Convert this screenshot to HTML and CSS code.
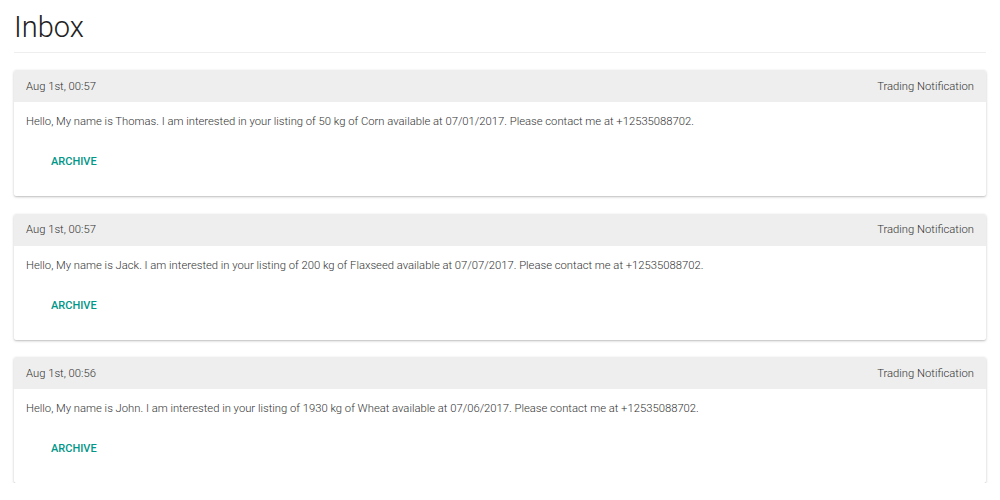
FILE: index.html
```html
<!DOCTYPE html>
<html>
<head>
<meta charset="utf-8">
<link rel="stylesheet" href="styles.css">
</head>
<body>
<div class="page">
  <h1 class="title">Inbox</h1>
  <div class="list">
    <div class="card">
      <div class="card-head"><span>Aug 1st, 00:57</span><span>Trading Notification</span></div>
      <div class="card-body">Hello, My name is Thomas. I am interested in your listing of 50 kg of Corn available at 07/01/2017. Please contact me at +12535088702.</div>
      <div class="card-actions"><button class="btn">ARCHIVE</button></div>
    </div>
    <div class="card">
      <div class="card-head"><span>Aug 1st, 00:57</span><span>Trading Notification</span></div>
      <div class="card-body">Hello, My name is Jack. I am interested in your listing of 200 kg of Flaxseed available at 07/07/2017. Please contact me at +12535088702.</div>
      <div class="card-actions"><button class="btn">ARCHIVE</button></div>
    </div>
    <div class="card">
      <div class="card-head"><span>Aug 1st, 00:56</span><span>Trading Notification</span></div>
      <div class="card-body">Hello, My name is John. I am interested in your listing of 1930 kg of Wheat available at 07/06/2017. Please contact me at +12535088702.</div>
      <div class="card-actions"><button class="btn">ARCHIVE</button></div>
    </div>
  </div>
</div>
</body>
</html>
```
FILE: styles.css
```css
html, body {
  margin: 0;
  padding: 0;
  background: #fff;
}
body {
  font-family: Roboto, "Liberation Sans", sans-serif;
  color: #333;
}
.page {
  padding: 0 14px;
}
.title {
  margin: 0;
  padding-top: 10px;
  font-size: 29px;
  font-weight: 300;
  line-height: 34px;
  color: #222;
  padding-bottom: 8px;
  border-bottom: 1px solid #eee;
}
.list {
  display: flex;
  flex-direction: column;
  gap: 17.5px;
  padding-top: 17px;
}
.card {
  background: #fff;
  border-radius: 2px;
  box-shadow: 0 1px 3px rgba(0,0,0,0.2), 0 1px 1px rgba(0,0,0,0.08);
  overflow: hidden;
}
.card-head {
  display: flex;
  justify-content: space-between;
  align-items: center;
  height: 32px;
  padding: 0 12px;
  background: #eee;
  font-size: 11.25px;
  font-weight: 300;
  color: #333;
}
.card-body {
  padding: 11px 12px 0;
  font-size: 11.25px;
  font-weight: 300;
  line-height: 18px;
  color: #333;
}
.card-actions {
  padding: 13px 21px 16px;
}
.btn {
  border: 0;
  background: none;
  font-family: Roboto, "Liberation Sans", sans-serif;
  font-size: 11px;
  font-weight: 500;
  color: #009688;
  padding: 0 16px;
  height: 36px;
  line-height: 36px;
}
```
